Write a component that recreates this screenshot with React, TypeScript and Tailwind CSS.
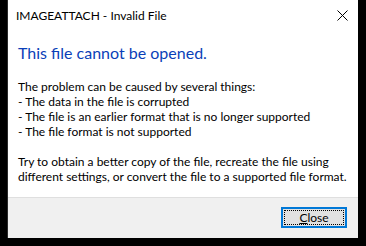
export default function App() {
  const font = { fontFamily: 'Lato, "Noto Sans", sans-serif' };
  return (
    <div className="w-[366px] h-[246px] bg-black pl-[7px]" style={font}>
      <div className="w-[351px] h-[238px] bg-white flex flex-col border-l border-[#2b2b2b]">
        {/* title bar */}
        <div className="h-[31px] flex items-center justify-between pl-[8px] pr-[10px]">
          <span className="text-[12px] text-black leading-none">IMAGEATTACH - Invalid File</span>
          <svg width="11" height="11" viewBox="0 0 11 11">
            <path d="M0.5 0.5 L10.5 10.5 M10.5 0.5 L0.5 10.5" stroke="#000" strokeWidth="1" />
          </svg>
        </div>

        {/* content */}
        <div className="flex-1 pl-[10px] pt-[12px] whitespace-nowrap">
          <div className="text-[16px] leading-[20px] text-[#0a3fb8]">This file cannot be opened.</div>
          <div className="mt-[16px] text-[12px] leading-[15px] text-black">
            <div>The problem can be caused by several things:</div>
            <div>- The data in the file is corrupted</div>
            <div>- The file is an earlier format that is no longer supported</div>
            <div>- The file format is not supported</div>
            <div className="h-[15px]"></div>
            <div>Try to obtain a better copy of the file, recreate the file using</div>
            <div>different settings, or convert the file to a supported file format.</div>
          </div>
        </div>

        {/* footer */}
        <div className="h-[41px] bg-[#f0f0f0] border-t border-[#dfdfdf] flex justify-end items-start pt-[9px] pr-[11px]">
          <button className="w-[66px] h-[21px] bg-[#e1e1e1] border-2 border-[#0078d7] p-[1px]">
            <div className="w-full h-full border border-dotted border-black flex items-center justify-center text-[12px] text-black leading-none">
              <span><span className="underline">C</span>lose</span>
            </div>
          </button>
        </div>
      </div>
    </div>
  );
}
